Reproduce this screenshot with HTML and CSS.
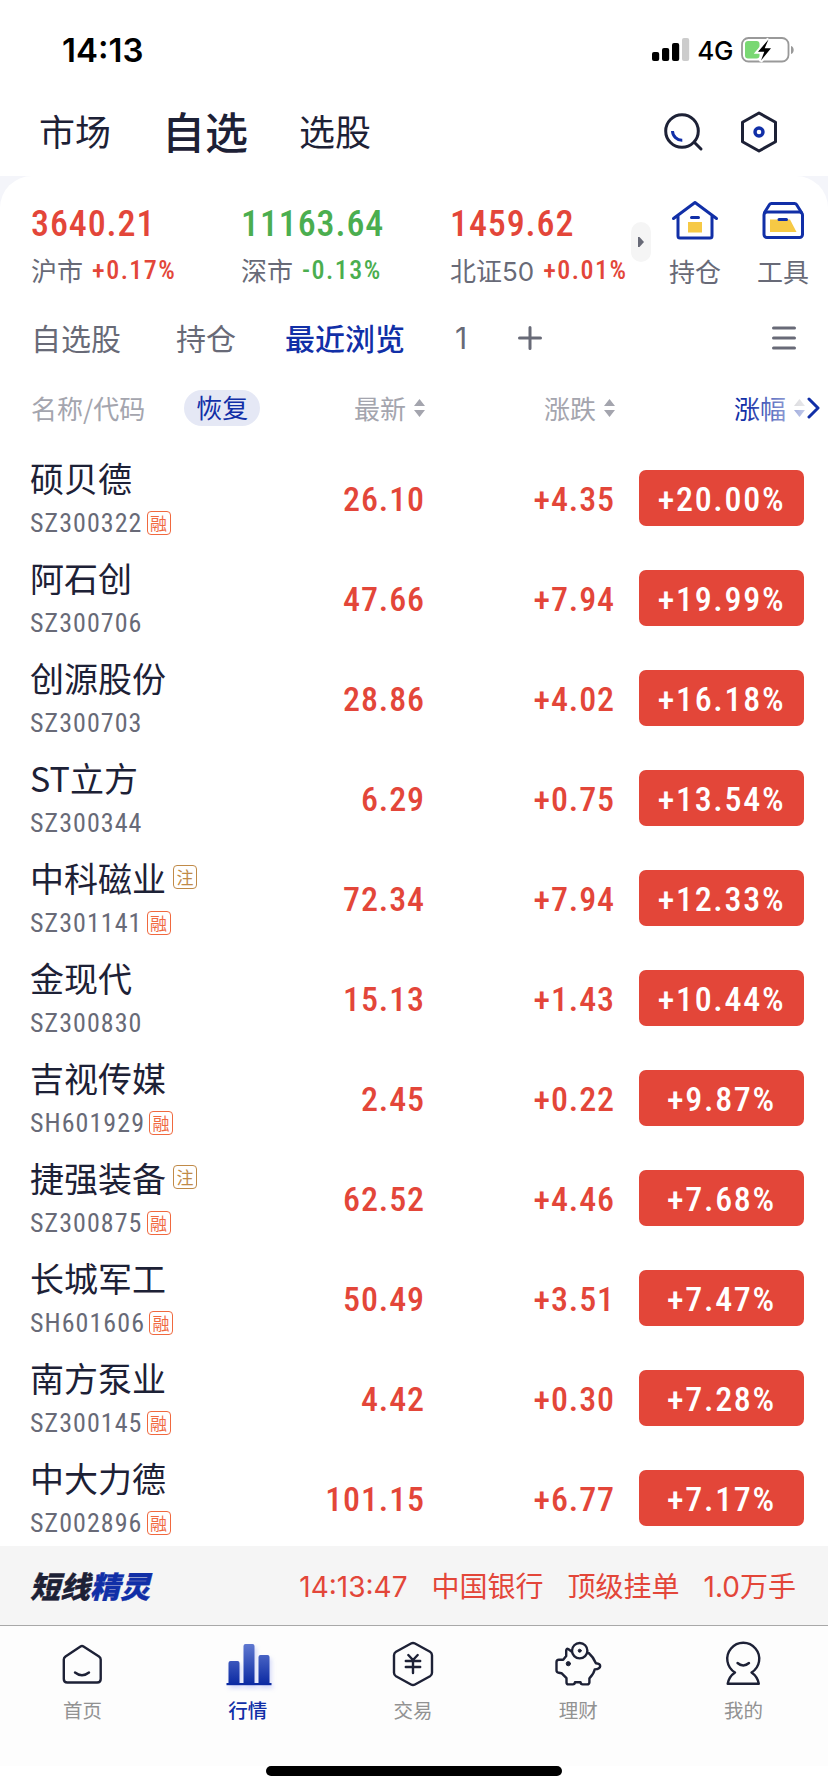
FILE: index.html
```html
<!DOCTYPE html>
<html lang="zh-CN">
<head>
  <title>自选</title>
  <meta charset="UTF-8">
  <meta name="viewport" content="width=device-width, initial-scale=1.0">
  <link rel="stylesheet" href="styles.css">
</head>
<body>
  <div class="app">
    <div class="status-bar">
      <div class="status-time">14:13</div>
      <div class="status-right">
        <svg class="signal" width="38" height="24" viewBox="0 0 38 24">
          <rect x="0" y="14" width="7.2" height="9" rx="2"/>
          <rect x="10" y="10" width="7.2" height="13" rx="2"/>
          <rect x="20" y="5" width="7.2" height="18" rx="2"/>
          <rect x="30" y="0" width="7.2" height="23" rx="2" fill="#ccc"/>
        </svg>
        <span class="network">4G</span>
        <svg class="battery" width="54" height="26" viewBox="0 0 54 26">
          <rect x="1" y="1" width="46.500" height="23.500" rx="6.500" fill="none" stroke="#999" stroke-width="1.800"/>
          <path d="M50 9c3.600 1 3.600 7 0 8z" fill="#999"/>
          <rect x="4" y="4" width="14.500" height="17.500" rx="3" fill="#79d873"/>
          <path d="M27.500 2 16.500 15h6.500l-3.500 9.500 11-13.500h-6.500z" stroke="#fff" stroke-width="3.500"/>
          <path d="M27.500 2.500 17 14.800h6.300L20 23.500l10-12.300h-6.300z"/>
        </svg>
      </div>
    </div>

    <div class="top-nav">
      <a class="nav-item nav-market">市场</a>
      <a class="nav-item nav-active">自选</a>
      <a class="nav-item nav-pick">选股</a>
      <div class="nav-icons">
        <svg width="40" height="40" viewBox="0 0 40 40" fill="none" stroke-width="3">
          <circle cx="18" cy="19" r="16.300" stroke="#1d2136"/>
          <path d="M31 31l6 6" stroke="#1d2136" stroke-linecap="round"/>
          <path d="M8.500 19a9.500 9.500 0 0 0 9.800 9.300" stroke="#112fa7"/>
        </svg>
        <svg width="40" height="42" viewBox="0 0 40 42" fill="none" stroke-width="3">
          <path d="M20 2 36.500 11.300v19.400L20 40 3.500 30.700V11.300z" stroke="#1d2136" stroke-linejoin="round"/>
          <circle cx="20" cy="21" r="4" stroke="#112fa7" stroke-width="3.400"/>
        </svg>
      </div>
    </div>

    <div class="content">
      <div class="card">
        <div class="indices">
          <div class="index index-sh">
            <div class="index-value up">3640.21</div>
            <div class="index-info">沪市<span class="index-rate up">+0.17%</span></div>
          </div>
          <div class="index index-sz">
            <div class="index-value down">11163.64</div>
            <div class="index-info">深市<span class="index-rate down">-0.13%</span></div>
          </div>
          <div class="index index-bj">
            <div class="index-value up">1459.62</div>
            <div class="index-info">北证50<span class="index-rate up">+0.01%</span></div>
          </div>
          <div class="index-more">
            <svg width="6" height="10" viewBox="0 0 6 10"><path d="M0 0h1.500L6 5 1.500 10H0z" fill="#686a77"/></svg>
          </div>
          <div class="shortcut">
            <svg width="48" height="42" viewBox="0 0 48 42" fill="none" stroke="#112fa7" stroke-width="3" stroke-linecap="round" stroke-linejoin="round">
              <rect x="17" y="23" width="14" height="10.500" fill="#f6c945" stroke="none"/>
              <path d="M2.500 19.500 24 3.500l21.500 16M7 17v20q0 2 2 2h30q2 0 2-2V17M20.500 18.500h7"/>
            </svg>
            <span>持仓</span>
          </div>
          <div class="shortcut shortcut-tools">
            <svg width="48" height="42" viewBox="0 0 48 42" fill="none" stroke="#112fa7" stroke-width="3" stroke-linecap="round" stroke-linejoin="round">
              <path d="M11 20.500h20L37.500 33H11z" fill="#f6c945" stroke="none"/>
              <rect x="5" y="13" width="38.500" height="25.500" rx="3"/>
              <path d="M5.500 13.500 10.500 5.500q.6-1 2-1h23q1.400 0 2 1l5 8M20 20.500h7.500"/>
            </svg>
            <span>工具</span>
          </div>
        </div>

        <div class="group-tabs">
          <a class="group-tab tab-own">自选股</a>
          <a class="group-tab tab-hold">持仓</a>
          <a class="group-tab tab-recent active">最近浏览</a>
          <a class="group-tab tab-one">1</a>
          <svg class="tab-add" width="24" height="24" viewBox="0 0 24 24" stroke="#686a77" stroke-width="3" stroke-linecap="round"><path d="M1.500 12h21M12 1.500v21"/></svg>
          <svg class="tab-menu" width="24" height="24" viewBox="0 0 24 24" stroke="#686a77" stroke-width="3" stroke-linecap="round"><path d="M1.500 2h21M1.500 12h21M1.500 22h21"/></svg>
        </div>

        <div class="list-head">
          <div class="head-name">名称/代码<span class="restore">恢复</span></div>
          <div class="head-col">最新<svg class="sort" width="11" height="18" viewBox="0 0 11 18"><path d="M5.500 0 11 7H0zM0 11h11l-5.500 7z"/></svg></div>
          <div class="head-col">涨跌<svg class="sort" width="11" height="18" viewBox="0 0 11 18"><path d="M5.500 0 11 7H0zM0 11h11l-5.500 7z"/></svg></div>
          <div class="head-col head-rate">
            涨幅<svg class="sort" width="11" height="18" viewBox="0 0 11 18"><path d="M5.500 0 11 7H0z"/><path d="M0 11h11l-5.500 7z" fill="#112fa7"/></svg>
            <svg class="head-next" width="13" height="22" viewBox="0 0 13 22" fill="none" stroke="#112fa7" stroke-width="3" stroke-linecap="round" stroke-linejoin="round"><path d="M2 2l9 9-9 9"/></svg>
          </div>
        </div>

        <div class="stock-list">
          <div class="stock">
            <div class="stock-info">
              <div class="stock-name">硕贝德</div>
              <div class="stock-code">SZ300322<span class="tag tag-margin">融</span></div>
            </div>
            <div class="stock-price">26.10</div>
            <div class="stock-change">+4.35</div>
            <div class="stock-rate">+20.00%</div>
          </div>
          <div class="stock">
            <div class="stock-info">
              <div class="stock-name">阿石创</div>
              <div class="stock-code">SZ300706</div>
            </div>
            <div class="stock-price">47.66</div>
            <div class="stock-change">+7.94</div>
            <div class="stock-rate">+19.99%</div>
          </div>
          <div class="stock">
            <div class="stock-info">
              <div class="stock-name">创源股份</div>
              <div class="stock-code">SZ300703</div>
            </div>
            <div class="stock-price">28.86</div>
            <div class="stock-change">+4.02</div>
            <div class="stock-rate">+16.18%</div>
          </div>
          <div class="stock">
            <div class="stock-info">
              <div class="stock-name">ST立方</div>
              <div class="stock-code">SZ300344</div>
            </div>
            <div class="stock-price">6.29</div>
            <div class="stock-change">+0.75</div>
            <div class="stock-rate">+13.54%</div>
          </div>
          <div class="stock">
            <div class="stock-info">
              <div class="stock-name">中科磁业<span class="tag tag-reg">注</span></div>
              <div class="stock-code">SZ301141<span class="tag tag-margin">融</span></div>
            </div>
            <div class="stock-price">72.34</div>
            <div class="stock-change">+7.94</div>
            <div class="stock-rate">+12.33%</div>
          </div>
          <div class="stock">
            <div class="stock-info">
              <div class="stock-name">金现代</div>
              <div class="stock-code">SZ300830</div>
            </div>
            <div class="stock-price">15.13</div>
            <div class="stock-change">+1.43</div>
            <div class="stock-rate">+10.44%</div>
          </div>
          <div class="stock">
            <div class="stock-info">
              <div class="stock-name">吉视传媒</div>
              <div class="stock-code">SH601929<span class="tag tag-margin">融</span></div>
            </div>
            <div class="stock-price">2.45</div>
            <div class="stock-change">+0.22</div>
            <div class="stock-rate">+9.87%</div>
          </div>
          <div class="stock">
            <div class="stock-info">
              <div class="stock-name">捷强装备<span class="tag tag-reg">注</span></div>
              <div class="stock-code">SZ300875<span class="tag tag-margin">融</span></div>
            </div>
            <div class="stock-price">62.52</div>
            <div class="stock-change">+4.46</div>
            <div class="stock-rate">+7.68%</div>
          </div>
          <div class="stock">
            <div class="stock-info">
              <div class="stock-name">长城军工</div>
              <div class="stock-code">SH601606<span class="tag tag-margin">融</span></div>
            </div>
            <div class="stock-price">50.49</div>
            <div class="stock-change">+3.51</div>
            <div class="stock-rate">+7.47%</div>
          </div>
          <div class="stock">
            <div class="stock-info">
              <div class="stock-name">南方泵业</div>
              <div class="stock-code">SZ300145<span class="tag tag-margin">融</span></div>
            </div>
            <div class="stock-price">4.42</div>
            <div class="stock-change">+0.30</div>
            <div class="stock-rate">+7.28%</div>
          </div>
          <div class="stock">
            <div class="stock-info">
              <div class="stock-name">中大力德</div>
              <div class="stock-code">SZ002896<span class="tag tag-margin">融</span></div>
            </div>
            <div class="stock-price">101.15</div>
            <div class="stock-change">+6.77</div>
            <div class="stock-rate">+7.17%</div>
          </div>
        </div>
      </div>
    </div>

    <div class="ticker">
      <div class="ticker-logo">短线<span>精灵</span></div>
      <div class="ticker-msg">
        <span>14:13:47</span>
        <span>中国银行</span>
        <span>顶级挂单</span>
        <span>1.0万手</span>
      </div>
    </div>

    <div class="tab-bar">
      <a class="tab">
        <svg width="48" height="48" viewBox="0 0 48 48" class="tab-icon">
          <path d="M21.500 6.500q1.500-1 3 0l15.500 10q1.700 1.200 1.700 3V39q0 3.500-3.500 3.500H8.300q-3.500 0-3.500-3.500V19.500q0-1.800 1.700-3z"/>
          <path d="M16 32.500q7 5.500 14 0"/>
        </svg>
        <span>首页</span>
      </a>
      <a class="tab active">
        <svg width="48" height="48" viewBox="0 0 48 48" class="tab-bars">
          <defs>
            <linearGradient id="bars" gradientUnits="userSpaceOnUse" x1="0" y1="4" x2="0" y2="44">
              <stop offset="0" stop-color="#5f78d0"/>
              <stop offset="1" stop-color="#0c2ba3"/>
            </linearGradient>
          </defs>
          <path d="M4.500 44V23q0-2 2-2H13.500q2 0 2 2v21zM19.500 44V6q0-2 2-2h7q2 0 2 2v38zM34.500 44V17q0-2 2-2H43.500q2 0 2 2v27z" fill="url(#bars)"/>
          <rect x="2.500" y="43" width="45" height="2.200" fill="#0c2ba3"/>
        </svg>
        <span>行情</span>
      </a>
      <a class="tab">
        <svg width="48" height="48" viewBox="0 0 48 48" class="tab-icon">
          <path d="M22 3.500q2-1.100 4 0l15 8.300q2 1.200 2 3.500v17.400q0 2.300-2 3.500l-15 8.300q-2 1.100-4 0l-15-8.300q-2-1.200-2-3.500V15.300q0-2.300 2-3.500z"/>
          <path d="M19.300 15l4.700 5 4.700-5M16.800 21h14.400M16.800 27h14.400M24 20v13"/>
        </svg>
        <span>交易</span>
      </a>
      <a class="tab">
        <svg width="48" height="48" viewBox="0 0 48 48" class="tab-icon">
          <circle cx="25.700" cy="10.700" r="7.700"/>
          <circle cx="25.700" cy="10.700" r="1.500" fill="#1d2136" stroke-width="1"/>
          <path d="M17.500 11.500 14.200 9q-1.700-.8-2 1.500v5.500l-3 3.700H5q-2.500 0-2.500 2.500v8q0 2.300 2.300 2.500L7.500 33.200l5 5v4q0 2.200 2 2.200h4.300q2 0 2.200-2.200h5.500q.2 2.200 2.200 2.200h4.500q2 0 2.200-2v-4q4.500-4.500 5.300-9 5.300-.2 5.500-3.200 0-2.700-4.300-3-2.400-6-7.200-10.200"/>
          <circle cx="14.300" cy="23.700" r="2.100" fill="#1d2136" stroke-width="1"/>
        </svg>
        <span>理财</span>
      </a>
      <a class="tab">
        <svg width="48" height="48" viewBox="0 0 48 48" class="tab-icon">
          <path d="M16 32.500a16 16 0 1 1 16.500 0q6 4 7.300 11.300H8.700q1.300-7.300 7.300-11.300z"/>
          <path d="M18.500 23q5.700 5 11.500 0"/>
        </svg>
        <span>我的</span>
      </a>
    </div>
    <div class="home-indicator"></div>
  </div>
</body>
</html>
```
FILE: styles.css
```css
:root {
  --primary: #112fa7;
  --dark: #1d2136;
  --gray: #686a77;
  --light-gray: #a4a5ae;
  --up: #e34639;
  --down: #4bae4f;
  --page: #f4f5fa;
  --cjk: "Noto Sans CJK SC", sans-serif;
  --num: Roboto, "Noto Sans CJK SC", sans-serif;
}

* {
  margin: 0;
  padding: 0;
  box-sizing: border-box;
}

body {
  background: #fff;
  color: var(--dark);
  font-family: var(--cjk);
}

svg {
  display: block;
  flex-shrink: 0;
}

.app {
  display: flex;
  flex-direction: column;
  width: 828px;
  height: 1792px;
  overflow: hidden;
}

/* Status bar */
.status-bar {
  display: flex;
  align-items: center;
  justify-content: space-between;
  height: 88px;
  padding: 12px 33px 0 62px;
  font-family: Inter, sans-serif;
  color: #000;
}

.status-time {
  font-size: 33px;
  font-weight: 600;
}

.status-right {
  display: flex;
  align-items: center;
}

.network {
  margin: 0 8px 0 7px;
  font-size: 26px;
  font-weight: 450;
  letter-spacing: -0.4px;
}

/* Top navigation */
.top-nav {
  display: flex;
  align-items: center;
  height: 88px;
  padding: 0 49px 0 39px;
}

.nav-item {
  padding-bottom: 3px;
  font-size: 36px;
  line-height: 85px;
}

.nav-active {
  margin: 0 51px 0 51px;
  font-size: 43px;
  font-weight: 500;
}

.nav-icons {
  display: flex;
  align-items: center;
  gap: 35px;
  margin-left: auto;
}

/* Card */
.content {
  height: 1370px;
  background: var(--page);
  overflow: hidden;
}

.card {
  height: 100%;
  background: #fff;
  border-radius: 32px 32px 0 0;
}

.up {
  color: var(--up);
}

.down {
  color: var(--down);
}

.indices {
  display: flex;
  height: 124px;
  padding: 25px 20px 0 31px;
}

.index,
.index-more,
.shortcut {
  flex-shrink: 0;
}

.index-sh {
  width: 210px;
}

.index-sz {
  width: 209px;
}

.index-bj {
  width: 181px;
}

.index-value,
.index-rate,
.stock-code,
.stock-price,
.stock-change,
.stock-rate {
  font-family: var(--num);
  font-stretch: 85%;
  font-weight: 500;
}

.index-value {
  font-size: 36px;
  line-height: 46px;
  letter-spacing: 0.9px;
}

.index-info {
  display: flex;
  align-items: center;
  height: 45px;
  color: var(--gray);
  font-family: Inter, "Noto Sans CJK SC", sans-serif;
  font-size: 26px;
  white-space: nowrap;
}

.index-rate {
  margin-left: 9px;
  letter-spacing: 1.5px;
}

.index-more {
  display: flex;
  align-items: center;
  justify-content: center;
  width: 20px;
  height: 40px;
  margin-top: 21px;
  border-radius: 10px;
  background: #f5f5f5;
}

.shortcut {
  display: flex;
  flex-direction: column;
  align-items: center;
  width: 52px;
  margin: -2px 0 0 18px;
  color: var(--gray);
  font-size: 26px;
  line-height: 59px;
  white-space: nowrap;
}

.shortcut-tools {
  margin-left: 36px;
}

/* Group tabs */
.group-tabs {
  display: flex;
  align-items: center;
  height: 76px;
  padding: 0 32px 0 31px;
  color: var(--gray);
  font-size: 30px;
}

.group-tab {
  padding-bottom: 3px;
}

.tab-hold {
  margin-left: 55px;
}

.tab-recent {
  margin-left: 49px;
}

.group-tab.active {
  color: var(--primary);
  font-weight: 500;
}

.tab-one {
  margin-left: 50px;
  padding-bottom: 0;
  font-family: Inter, sans-serif;
}

.tab-add {
  margin-left: 51px;
}

.tab-menu {
  margin-left: auto;
}

/* List header */
.list-head {
  display: grid;
  grid-template-columns: 280px 114px 190px 1fr;
  align-items: center;
  height: 64px;
  padding-left: 31px;
  color: var(--light-gray);
  font-size: 26px;
  line-height: 36px;
}

.head-name,
.head-col {
  display: flex;
  align-items: center;
}

.head-col {
  justify-content: flex-end;
}

.restore {
  height: 36px;
  margin-left: 39px;
  padding: 0 12px;
  border-radius: 18px;
  background: #e5e8f5;
  color: var(--primary);
  line-height: 34px;
}

.sort {
  margin-left: 8px;
  fill: var(--light-gray);
}

.head-rate {
  position: relative;
  justify-content: flex-start;
  padding-left: 119px;
  color: var(--primary);
}

.head-rate::after {
  content: '';
  position: absolute;
  top: 0;
  right: 23px;
  width: 60px;
  height: 100%;
  background: linear-gradient(90deg, rgba(255, 255, 255, 0), rgba(255, 255, 255, 0.75));
}

.head-next {
  margin-left: 2px;
}

/* Stock list */
.stock-list {
  padding-top: 8px;
}

.stock {
  display: grid;
  grid-template-columns: 250px 145px 190px 165px;
  align-items: center;
  height: 100px;
  padding-left: 30px;
}

.stock-name {
  display: flex;
  align-items: center;
  height: 46px;
  font-size: 34px;
}

.stock-code {
  display: flex;
  align-items: center;
  height: 42px;
  padding-top: 4px;
  color: var(--gray);
  font-size: 26px;
  font-weight: 450;
  letter-spacing: 1.05px;
}

.tag {
  width: 24px;
  height: 24px;
  border: 1px solid;
  border-radius: 4px;
  font-family: var(--cjk);
  font-size: 17px;
  font-weight: 400;
  line-height: 21px;
  letter-spacing: 0;
  text-align: center;
}

.tag-margin {
  margin-left: 4px;
  color: #f0693f;
}

.tag-reg {
  margin-left: 7px;
  color: #c08a48;
}

.stock-price,
.stock-change,
.stock-rate {
  font-size: 34px;
  text-align: right;
}

.stock-price,
.stock-change {
  padding-top: 2px;
  color: var(--up);
  letter-spacing: 0.9px;
}

.stock-rate {
  width: 165px;
  height: 56px;
  margin-left: 24px;
  border-radius: 7px;
  background: var(--up);
  color: #fff;
  line-height: 59px;
  letter-spacing: 1.7px;
  text-align: center;
}

/* Ticker */
.ticker {
  display: flex;
  align-items: center;
  justify-content: space-between;
  height: 80px;
  padding: 0 32px 2px 30px;
  border-bottom: 1px solid #a8a8a8;
  background: #f5f5f5;
}

.ticker-logo {
  font-size: 30px;
  font-style: italic;
  font-weight: 900;
  -webkit-text-stroke: 0.3px;
}

.ticker-logo span {
  color: var(--primary);
}

.ticker-msg {
  display: flex;
  align-items: baseline;
  gap: 24px;
  color: var(--up);
  font-family: Inter, "Noto Sans CJK SC", sans-serif;
  font-size: 28px;
}

/* Bottom tab bar */
.tab-bar {
  display: flex;
  height: 140px;
  padding: 14px 2px 0 0;
  background: #fdfdfd;
}

.tab {
  display: flex;
  flex: 1;
  flex-direction: column;
  align-items: center;
  color: #929292;
  font-size: 19.5px;
  line-height: 43px;
}

.tab.active {
  color: var(--primary);
  font-weight: 500;
}

.tab-icon {
  fill: none;
  stroke: var(--dark);
  stroke-width: 2.4;
  stroke-linecap: round;
  stroke-linejoin: round;
}

.tab-bars {
  filter: drop-shadow(2px 3px 2px rgba(90, 110, 240, 0.25));
}

.home-indicator {
  width: 296px;
  height: 10px;
  margin: 0 auto;
  border-radius: 5px;
  background: #000;
}
```
